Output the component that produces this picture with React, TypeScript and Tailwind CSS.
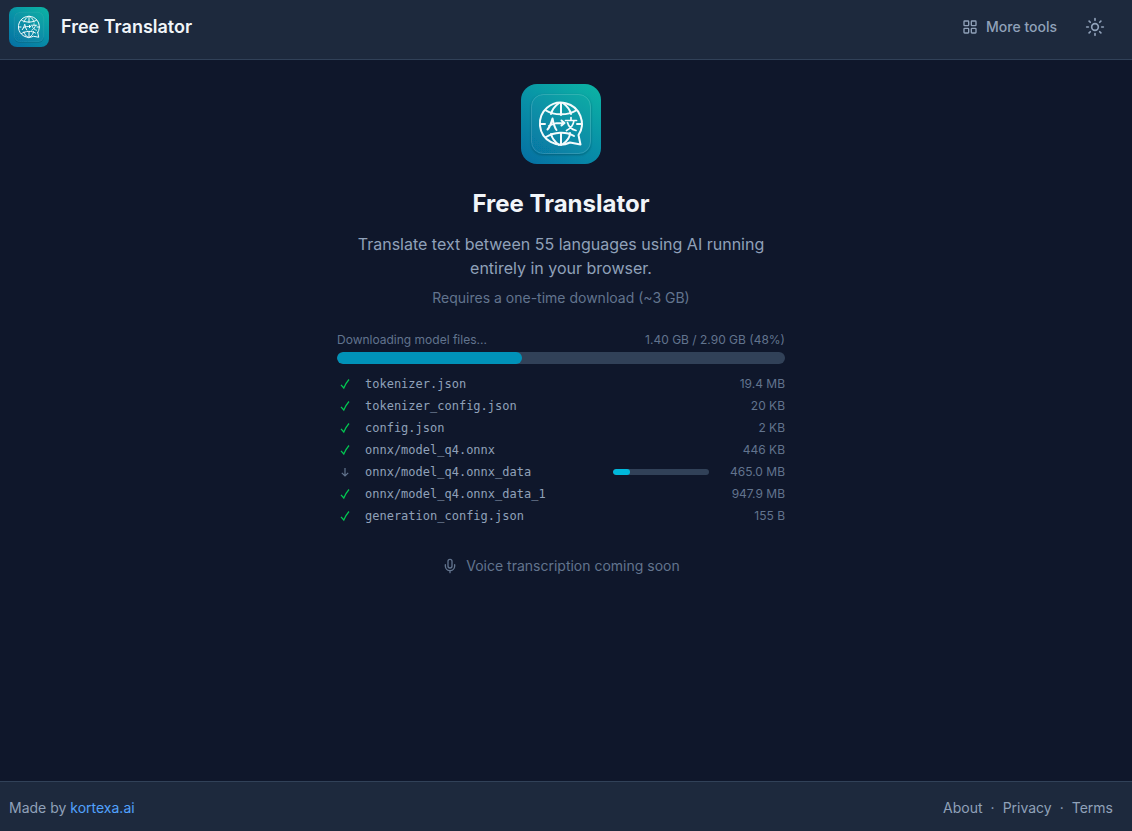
import { LayoutGrid, Mic, Sun } from "lucide-react";

type ModelFile = {
  name: string;
  size: string;
  progress?: number;
};

const files: ModelFile[] = [
  { name: "tokenizer.json", size: "19.4 MB" },
  { name: "tokenizer_config.json", size: "20 KB" },
  { name: "config.json", size: "2 KB" },
  { name: "onnx/model_q4.onnx", size: "446 KB" },
  { name: "onnx/model_q4.onnx_data", size: "465.0 MB", progress: 18 },
  { name: "onnx/model_q4.onnx_data_1", size: "947.9 MB" },
  { name: "generation_config.json", size: "155 B" },
];

const Logo = ({ id, className }: { id: string; className: string }) => {
  return (
    <svg viewBox="0 0 80 80" className={className} aria-hidden="true">
      <defs>
        <linearGradient id={id} gradientUnits="userSpaceOnUse" x1="14" y1="80" x2="66" y2="0">
          <stop offset="0" stopColor="#0673a3" />
          <stop offset="0.5" stopColor="#0890a7" />
          <stop offset="1" stopColor="#0cb0a4" />
        </linearGradient>
        <filter id={`${id}-shadow`} x="-20%" y="-20%" width="140%" height="140%">
          <feDropShadow dx="0" dy="1" stdDeviation="1.2" floodColor="#064e5e" floodOpacity="0.6" />
        </filter>
      </defs>
      <rect width="80" height="80" rx="16" fill={`url(#${id})`} />
      <rect
        x="10"
        y="10"
        width="60"
        height="60"
        rx="12"
        fill={`url(#${id})`}
        filter={`url(#${id}-shadow)`}
      />
      <rect x="10.5" y="10.5" width="59" height="59" rx="12" fill="none" stroke="#ffffff" strokeOpacity="0.14" />
      <g fill="none" stroke="#f4fbfc" strokeWidth="2" strokeLinecap="round" strokeLinejoin="round">
        {/* globe with a speech bubble tail */}
        <path d="M57.500 51A21 21 0 1 0 49 58.500L59.500 60.500Q58.500 56 57.500 51" />
        <path d="M40 19v12M40 49v12M19 40h5M56 40h5" />
        <path d="M38 19c-4 3-7 7-8 11M42 19c4 3 7 7 8 11M30 50c1 4 4 8 8 11M49 49c0 4-3 8-7 11" />
        <path d="M25 26.500c8 5 22 5 30 0M25 53c8-5 20-6 28-1" />
        {/* A -> 文 */}
        <path d="M26.500 45.500c3-3 4-8 5-11 1 5 2 9 4 11.500M28 42c4-3 8-3 15-3M40.500 36.500l3 2.500-3 2.500" />
        <path d="M44.500 36.500h11M50 33.500v3M45.500 46.500c4-2 7-6 7.500-10M46.500 38.500c1 4 4.500 7 8.500 8" strokeWidth="1.700" />
      </g>
    </svg>
  );
};

const Header = () => {
  return (
    <header className="flex h-[60px] items-start justify-between border-b border-slate-700 bg-slate-800 pt-[7px] pr-[19px] pl-[9px]">
      <div className="flex items-center gap-3">
        <Logo id="header-logo" className="size-10" />
        <span className="text-lg font-semibold text-slate-100">Free Translator</span>
      </div>
      <div className="flex h-10 items-center gap-3 text-slate-400">
        <button type="button" className="flex items-center gap-2 px-2 text-sm font-medium">
          <LayoutGrid size={16} />
          More tools
        </button>
        <button type="button" aria-label="Toggle theme" className="flex size-9 items-center justify-center">
          <Sun size={20} />
        </button>
      </div>
    </header>
  );
};

const StatusIcon = ({ done }: { done: boolean }) => {
  return (
    <svg
      viewBox="0 0 16 16"
      className={`size-4 ${done ? "text-green-500" : "text-slate-500"}`}
      fill="none"
      stroke="currentColor"
      strokeWidth="1.2"
      aria-hidden="true"
    >
      {done ? <path d="M4 8.800L6.800 12Q8.500 7.500 12 3.500" /> : <path d="M8 4v8M4.800 8.800L8 12l3.200-3.200" />}
    </svg>
  );
};

const FileRow = ({ file }: { file: ModelFile }) => {
  return (
    <li className="flex h-4 items-center gap-3">
      <StatusIcon done={file.progress === undefined} />
      <span className="flex-1 truncate font-['DejaVu_Sans_Mono',monospace] text-slate-400">
        {file.name}
      </span>
      {file.progress !== undefined && (
        <div className="h-1.5 w-24 overflow-hidden rounded-full bg-slate-700">
          <div className="h-full rounded-full bg-cyan-500" style={{ width: `${file.progress}%` }}></div>
        </div>
      )}
      <span className="w-16 text-right text-slate-500">{file.size}</span>
    </li>
  );
};

const Footer = () => {
  return (
    <footer className="flex h-[50px] items-center justify-between border-t border-slate-700 bg-slate-800 pt-0.5 pr-[19px] pl-[9px] text-sm text-slate-400">
      <p>
        Made by{" "}
        <a href="#kortexa" className="text-blue-400">
          kortexa.ai
        </a>
      </p>
      <nav className="flex gap-2">
        <a href="#about">About</a>
        <span>·</span>
        <a href="#privacy">Privacy</a>
        <span>·</span>
        <a href="#terms">Terms</a>
      </nav>
    </footer>
  );
};

const App = () => {
  return (
    <div className="flex min-h-screen flex-col bg-slate-900 font-['Inter',sans-serif] text-slate-100">
      <Header />
      <main className="flex flex-1 flex-col items-center pt-6 pr-[10px]">
        <Logo id="hero-logo" className="size-20" />
        <h1 className="mt-6 text-2xl font-bold">Free Translator</h1>
        <p className="mt-3 max-w-md text-center text-slate-400">
          Translate text between 55 languages using AI running
          <br />
          entirely in your browser.
        </p>
        <p className="mt-2 text-sm text-slate-500">Requires a one-time download (~3 GB)</p>
        <section className="mt-6 w-full max-w-md text-xs">
          <div className="flex justify-between text-slate-500">
            <span>Downloading model files...</span>
            <span>1.40 GB / 2.90 GB (48%)</span>
          </div>
          <div className="mt-1 h-3 overflow-hidden rounded-full bg-slate-700">
            <div className="h-full rounded-full bg-cyan-600" style={{ width: "41.3%" }}></div>
          </div>
          <ul className="mt-3 flex flex-col gap-1.5">
            {files.map((file) => (
              <FileRow key={file.name} file={file} />
            ))}
          </ul>
        </section>
        <p className="mt-8 flex items-center gap-2 text-sm text-slate-500">
          <Mic size={16} />
          Voice transcription coming soon
        </p>
      </main>
      <Footer />
    </div>
  );
};

export default App;
